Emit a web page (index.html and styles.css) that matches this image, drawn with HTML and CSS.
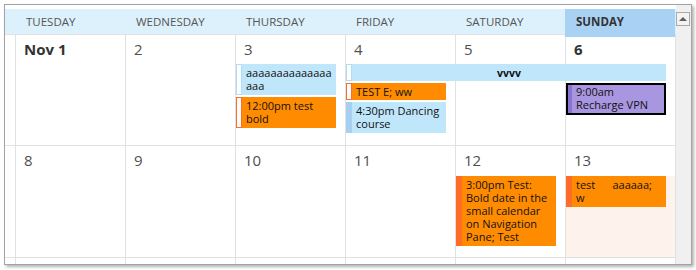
FILE: index.html
```html
<!DOCTYPE html>
<html lang="en">
<head>
  <meta charset="UTF-8">
  <title>Calendar - Month</title>
  <link rel="stylesheet" href="styles.css">
</head>
<body>
  <div class="frame">
    <div class="calendar">
      <div class="days">
        <div></div>
        <div class="day-name">TUESDAY</div>
        <div class="day-name">WEDNESDAY</div>
        <div class="day-name">THURSDAY</div>
        <div class="day-name">FRIDAY</div>
        <div class="day-name">SATURDAY</div>
        <div class="day-name today">SUNDAY</div>
      </div>

      <!-- week 1 -->
      <div class="week w1">
        <div class="cell c2"><span class="date strong">Nov 1</span></div>
        <div class="cell c3"><span class="date">2</span></div>
        <div class="cell c4"><span class="date">3</span></div>
        <div class="cell c5"><span class="date">4</span></div>
        <div class="cell c6"><span class="date">5</span></div>
        <div class="cell c7"><span class="date strong">6</span></div>

        <div class="stack thu">
          <div class="ev blue"><span class="mark free"></span><span class="txt wrap">aaaaaaaaaaaaaaaaa</span></div>
          <div class="ev orange"><span class="mark free"></span><span class="txt">12:00pm test bold</span></div>
        </div>

        <div class="ev blue allday"><span class="mark free"></span><span class="txt">vvvv</span></div>

        <div class="stack fri">
          <div class="ev orange one"><span class="mark free"></span><span class="txt">TEST E; ww</span></div>
          <div class="ev blue"><span class="mark busy"></span><span class="txt">4:30pm Dancing course</span></div>
        </div>

        <div class="stack sun">
          <div class="ev purple selected"><span class="mark busy"></span><span class="txt">9:00am Recharge VPN</span></div>
        </div>
      </div>

      <!-- week 2 -->
      <div class="week w2">
        <div class="cell c2"><span class="date">8</span></div>
        <div class="cell c3"><span class="date">9</span></div>
        <div class="cell c4"><span class="date">10</span></div>
        <div class="cell c5"><span class="date">11</span></div>
        <div class="cell c6"><span class="date">12</span></div>
        <div class="cell c7"><span class="date">13</span></div>

        <div class="stack sat">
          <div class="ev orange"><span class="mark busy"></span><span class="txt">3:00pm Test: Bold date in the small calendar on Navigation Pane; Test</span></div>
        </div>

        <div class="busy-day">
          <div class="ev orange"><span class="mark busy"></span><span class="txt">test&nbsp;&nbsp;&nbsp;&nbsp;&nbsp;&nbsp;aaaaaa; w</span></div>
        </div>
      </div>

      <!-- week 3 (cut off) -->
      <div class="week w3">
        <div class="cell c2"></div>
        <div class="cell c3"></div>
        <div class="cell c4"></div>
        <div class="cell c5"></div>
        <div class="cell c6"></div>
        <div class="cell c7"></div>
      </div>
    </div>

    <div class="scrollbar">
      <div class="scroll-up"><span class="arrow"></span></div>
    </div>
  </div>
</body>
</html>
```

FILE: styles.css
```css
body {
  margin: 0;
  padding: 4px;
  font-family: 'Open Sans', 'DejaVu Sans', sans-serif;
  background: #fff;
}

.frame {
  display: flex;
  width: 686px;
  height: 259px;
  border: 1px solid #a3a3a3;
  box-shadow: 2px 2px 3px rgba(0,0,0,0.3);
  background: #fff;
}

.calendar {
  width: 671px;
  padding-top: 4px;
  overflow: hidden;
}

.days {
  display: grid;
  grid-template-columns: 10px repeat(6, 110px);
  grid-template-rows: 25px;
  background: #ddf1fc;
  width: 671px;
}

.day-name {
  padding-left: 11px;
  line-height: 25px;
  font-size: 11.5px;
  color: #555;
}

.day-name.today {
  height: 28px;
  background: #a9d1f3;
  color: #333;
  font-weight: bold;
  position: relative;
  z-index: 1;
}

.week {
  display: grid;
  grid-template-columns: 10px repeat(6, 110px);
  border-top: 1px solid #e1e1e1;
  border-right: 1px solid #e1e1e1;
}

.w1 {
  height: 110px;
  grid-template-rows: 29px 19px 1fr;
}

.w2 {
  height: 111px;
  grid-template-rows: 30px 1fr;
}

.w3 {
  height: 20px;
}

.cell {
  grid-row: 1 / -1;
  border-left: 1px solid #e1e1e1;
}

.c2 { grid-column: 2; }
.c3 { grid-column: 3; }
.c4 { grid-column: 4; }
.c5 { grid-column: 5; }
.c6 { grid-column: 6; }
.c7 { grid-column: 7; }

.date {
  display: block;
  padding: 4px 0 0 8px;
  font-size: 15px;
  line-height: 20px;
  color: #505050;
}

.date.strong {
  font-weight: bold;
  color: #333;
}

.stack {
  display: flex;
  flex-direction: column;
  gap: 2px;
  margin: 0 9px 0 1px;
}

.thu { grid-column: 4; grid-row: 2 / 4; }
.fri { grid-column: 5; grid-row: 3; }
.sun { grid-column: 7; grid-row: 3; }
.sat { grid-column: 6; grid-row: 2; }

.ev {
  display: flex;
  font-size: 11px;
  line-height: 13px;
  color: #111;
}

.mark {
  width: 6px;
  flex: none;
  box-sizing: border-box;
}

.txt {
  flex: 1;
  padding: 2px 4px 3px 4px;
}

.wrap {
  word-break: break-all;
}

.one .txt {
  padding-bottom: 2px;
}

.blue { background: #c0e6fb; }
.blue .mark.free { background: #fff; border: 1px solid #b0dcf6; }
.blue .mark.busy { background: #a6cff2; }

.orange { background: #ff8c00; }
.orange .mark.free { background: #fff; border: 1px solid #ff6a26; }
.orange .mark.busy { background: #ff6c2a; }

.purple { background: #a996e0; }
.purple .mark.busy { background: #8a74cf; width: 4px; }
.purple .txt { padding: 0 4px 2px 4px; }

.selected {
  border: 2px solid #000;
}

.allday {
  grid-column: 5 / 8;
  grid-row: 2;
  margin: 0 9px 2px 1px;
  height: 17px;
}

.allday .txt {
  text-align: center;
  font-weight: bold;
  padding: 3px 0 0;
  font-size: 10.5px;
}

.busy-day {
  grid-column: 7;
  grid-row: 2;
  margin-left: 1px;
  background: #fdf2ec;
}

.busy-day .ev {
  margin-right: 9px;
}

.scrollbar {
  width: 15px;
  background: #f0f0f0;
  padding-top: 7px;
}

.scroll-up {
  width: 14px;
  height: 14px;
  box-sizing: border-box;
  border: 1px solid #a9a9a9;
  background: #f3f3f3;
  display: flex;
  justify-content: center;
  align-items: center;
}

.arrow {
  width: 0;
  height: 0;
  border-left: 4px solid transparent;
  border-right: 4px solid transparent;
  border-bottom: 4px solid #5f5f5f;
}
```
